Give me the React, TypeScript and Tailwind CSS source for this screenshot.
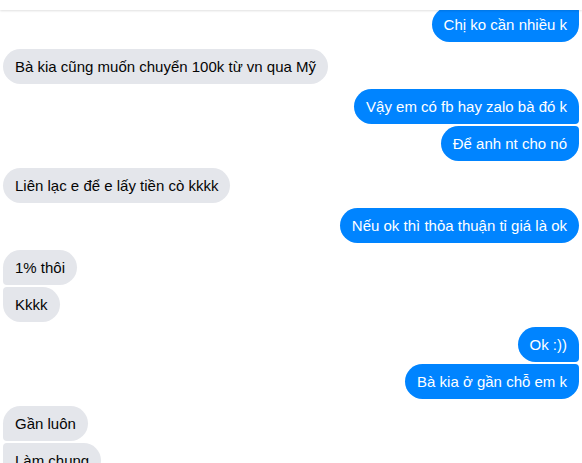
const messages = [
  { text: "Chị ko cần nhiều k", mine: true, gap: "mt-0", corner: "rounded-tr-[4px]" },
  { text: "Bà kia cũng muốn chuyển 100k từ vn qua Mỹ", mine: false, gap: "mt-[7px]", corner: "" },
  { text: "Vậy em có fb hay zalo bà đó k", mine: true, gap: "mt-[5px]", corner: "rounded-br-[4px]" },
  { text: "Để anh nt cho nó", mine: true, gap: "mt-[2px]", corner: "rounded-tr-[4px]" },
  { text: "Liên lạc e để e lấy tiền cò kkkk", mine: false, gap: "mt-[7px]", corner: "" },
  { text: "Nếu ok thì thỏa thuận tỉ giá là ok", mine: true, gap: "mt-[5px]", corner: "" },
  { text: "1% thôi", mine: false, gap: "mt-[7px]", corner: "rounded-bl-[4px]" },
  { text: "Kkkk", mine: false, gap: "mt-[2px]", corner: "rounded-tl-[4px]" },
  { text: "Ok :))", mine: true, gap: "mt-[5px]", corner: "rounded-br-[4px]" },
  { text: "Bà kia ở gần chỗ em k", mine: true, gap: "mt-[2px]", corner: "rounded-tr-[4px]" },
  { text: "Gần luôn", mine: false, gap: "mt-[7px]", corner: "rounded-bl-[4px]" },
  { text: "Làm chung", mine: false, gap: "mt-[2px]", corner: "rounded-tl-[4px] rounded-bl-[4px]" },
];

function Bubble({ text, mine, gap, corner }: (typeof messages)[number]) {
  return (
    <div className={`flex ${mine ? "justify-end" : "justify-start"} ${gap}`}>
      <div
        className={`rounded-[18px] px-3 py-2 text-[15px] leading-[19px] whitespace-nowrap ${corner} ${
          mine ? "bg-[#0084ff] text-white" : "bg-[#e4e6eb] text-[#050505]"
        }`}
      >
        {text}
      </div>
    </div>
  );
}

export default function App() {
  return (
    <div className="h-[463px] w-[582px] overflow-hidden bg-white font-['Liberation_Sans',Arial,sans-serif]">
      {/* header strip over the scrolled thread */}
      <div className="relative z-10 h-[10px] bg-white shadow-[0_1px_2px_rgba(0,0,0,0.12)]" />

      <div className="-mt-[3px] flex flex-col px-[3px]">
        {messages.map((m, i) => (
          <Bubble key={i} {...m} />
        ))}
      </div>
    </div>
  );
}
